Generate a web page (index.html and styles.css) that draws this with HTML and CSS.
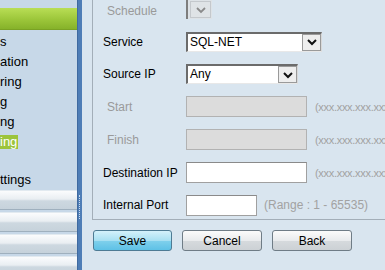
FILE: index.html
```html
<!DOCTYPE html>
<html>
<head>
<meta charset="utf-8">
<link rel="stylesheet" href="styles.css">
</head>
<body>
<div class="page">
  <aside class="sidebar">
    <div class="menu-head"></div>
    <ul class="menu">
      <li>s</li>
      <li>ation</li>
      <li>ring</li>
      <li>g</li>
      <li>ng</li>
      <li><span class="active">ing</span></li>
      <li></li>
      <li class="short">ttings</li>
    </ul>
    <div class="bars">
      <div class="bar"></div>
      <div class="bar"></div>
      <div class="bar"></div>
      <div class="bar"></div>
    </div>
  </aside>
  <div class="divider"><span class="grip"></span></div>
  <main class="main">
    <section class="box">
      <div class="form">
        <label class="lbl dis first">Schedule</label>
        <div class="ctl"><div class="sel-dis"><span class="arrow-dis"><svg width="14" height="10" viewBox="0 0 14 10"><polyline points="3,3 7,7 11,3" fill="none" stroke="#8a8a8a" stroke-width="1.8"/></svg></span></div></div>

        <label class="lbl">Service</label>
        <div class="ctl"><div class="select w136"><span class="val">SQL-NET</span><span class="arrow"><svg width="14" height="10" viewBox="0 0 14 10"><polyline points="3,3 7,7 11,3" fill="none" stroke="#111" stroke-width="2"/></svg></span></div></div>

        <label class="lbl">Source IP</label>
        <div class="ctl"><div class="select w112"><span class="val">Any</span><span class="arrow"><svg width="14" height="10" viewBox="0 0 14 10"><polyline points="3,3 7,7 11,3" fill="none" stroke="#111" stroke-width="2"/></svg></span></div></div>

        <label class="lbl dis">Start</label>
        <div class="ctl"><div class="inp dis-inp w121"></div><span class="hint">(xxx.xxx.xxx.xxx)</span></div>

        <label class="lbl dis">Finish</label>
        <div class="ctl"><div class="inp dis-inp w121"></div><span class="hint">(xxx.xxx.xxx.xxx)</span></div>

        <label class="lbl">Destination IP</label>
        <div class="ctl"><div class="inp w121"></div><span class="hint">(xxx.xxx.xxx.xxx)</span></div>

        <label class="lbl">Internal Port</label>
        <div class="ctl"><div class="inp w71"></div><span class="hint range">(Range : 1 - 65535)</span></div>
      </div>
    </section>
    <div class="buttons">
      <button class="btn primary">Save</button>
      <button class="btn">Cancel</button>
      <button class="btn">Back</button>
    </div>
  </main>
</div>
</body>
</html>
```
FILE: styles.css
```css
* { box-sizing: border-box; }
html, body {
  margin: 0;
  padding: 0;
  width: 385px;
  height: 270px;
  overflow: hidden;
  font-family: "Liberation Sans", Arial, sans-serif;
  font-size: 12px;
  color: #000;
}
.page {
  display: flex;
  width: 385px;
  height: 270px;
}
.sidebar {
  width: 77px;
  flex: none;
  background: #c7d8e8;
  overflow: hidden;
  display: flex;
  flex-direction: column;
}
.sidebar > * { flex: none; }
.menu-head {
  margin-top: 8px;
  height: 22px;
  background: linear-gradient(#b9de55, #9cc63a 55%, #86b22a);
  border-bottom: 1px solid #7aa224;
}
.menu {
  list-style: none;
  margin: 2px 0 0 0;
  padding: 0;
  font-size: 13px;
}
.menu li {
  height: 20px;
  line-height: 20px;
  white-space: nowrap;
}
.menu li.short { height: 16px; line-height: 16px; }
.menu .active {
  display: inline-block;
  background: #9cc43c;
  color: #fff;
  line-height: 14px;
  height: 14px;
  padding-right: 1px;
}
.bars {
  margin-top: 2px;
  display: flex;
  flex-direction: column;
  gap: 2px;
}
.bar {
  height: 20px;
  flex: none;
  background: linear-gradient(#fbfcfd, #e9eef2 45%, #cdd8e0 55%, #c6d2db);
  border-top: 1px solid #e2eaf0;
  border-bottom: 1px solid #9fb0be;
}
.divider {
  width: 5px;
  flex: none;
  background: #4e7db6;
  border-left: 1px solid #3f6aa0;
  position: relative;
}
.grip {
  position: absolute;
  left: 1px;
  top: 195px;
  width: 1px;
  height: 24px;
  border-left: 1px dotted #c8dcf0;
}
.main {
  flex: 1;
  background: #d9e5ef;
  padding-left: 10px;
  overflow: hidden;
}
.box {
  border-left: 1px solid #a3aeb8;
  border-bottom: 1px solid #a3aeb8;
  height: 228px;
  padding-left: 10px;
  width: 320px;
}
.form {
  display: grid;
  grid-template-columns: 83px 1fr;
  grid-template-rows: 33px 33px 32px 33px 33px 33px 32px;
  margin-top: -8px;
  align-items: center;
}
.lbl { white-space: nowrap; }
.lbl.dis { color: #9a9a9a; padding-left: 4px; }
.lbl.first { padding-top: 5px; }
.ctl {
  display: flex;
  align-items: center;
  white-space: nowrap;
}
.sel-dis {
  width: 26px;
  height: 21px;
  border-left: 2px solid #7d7d7d;
  border-top: 2px solid #7d7d7d;
  background: #dde2e6;
  display: flex;
  justify-content: flex-end;
  align-items: stretch;
  padding: 1px 1px 1px 2px;
}
.arrow-dis {
  width: 21px;
  display: flex;
  align-items: center;
  justify-content: center;
  background: #dfe3e6;
  border: 1px solid #c4c8cc;
}
.select {
  height: 20px;
  background: #fff;
  border-top: 2px solid #6b6b6b;
  border-left: 2px solid #6b6b6b;
  border-right: 1px solid #d8d8d8;
  border-bottom: 1px solid #e8e8e8;
  display: flex;
  align-items: stretch;
}
.w136 { width: 136px; }
.w112 { width: 112px; }
.select .val {
  flex: 1;
  padding-left: 2px;
  line-height: 17px;
  font-size: 12px;
}
.select .arrow {
  width: 19px;
  background: #eeeeee;
  border: 1px solid #9a9a9a;
  display: flex;
  align-items: center;
  justify-content: center;
}
.inp {
  height: 21px;
  background: #fff;
  border: 1px solid #a0a0a0;
  border-top-color: #8a8a8a;
}
.dis-inp {
  background: #dcdcdc;
  border-color: #b2b2b2;
}
.w121 { width: 121px; }
.w71 { width: 71px; }
.hint {
  color: #a2a2a2;
  margin-left: 8px;
  font-size: 11px;
  letter-spacing: -0.3px;
}
.hint.range {
  margin-left: 7px;
  font-size: 12px;
  letter-spacing: 0;
}
.buttons {
  display: flex;
  gap: 10px;
  margin-top: 10px;
  padding-left: 1px;
}
.btn {
  width: 80px;
  height: 21px;
  font-family: "Liberation Sans", Arial, sans-serif;
  font-size: 12px;
  color: #000;
  border: 1px solid #6f7c86;
  border-radius: 3px;
  background: linear-gradient(#fbfbfb, #e9ebed 50%, #d6dadd 52%, #ccd1d5);
  padding: 0;
}
.btn.primary {
  width: 79px;
  border-color: #4e7b94;
  background: linear-gradient(#d4f1fb, #a8e0f2 50%, #7fd0ec 52%, #5ec1e6);
}
```
